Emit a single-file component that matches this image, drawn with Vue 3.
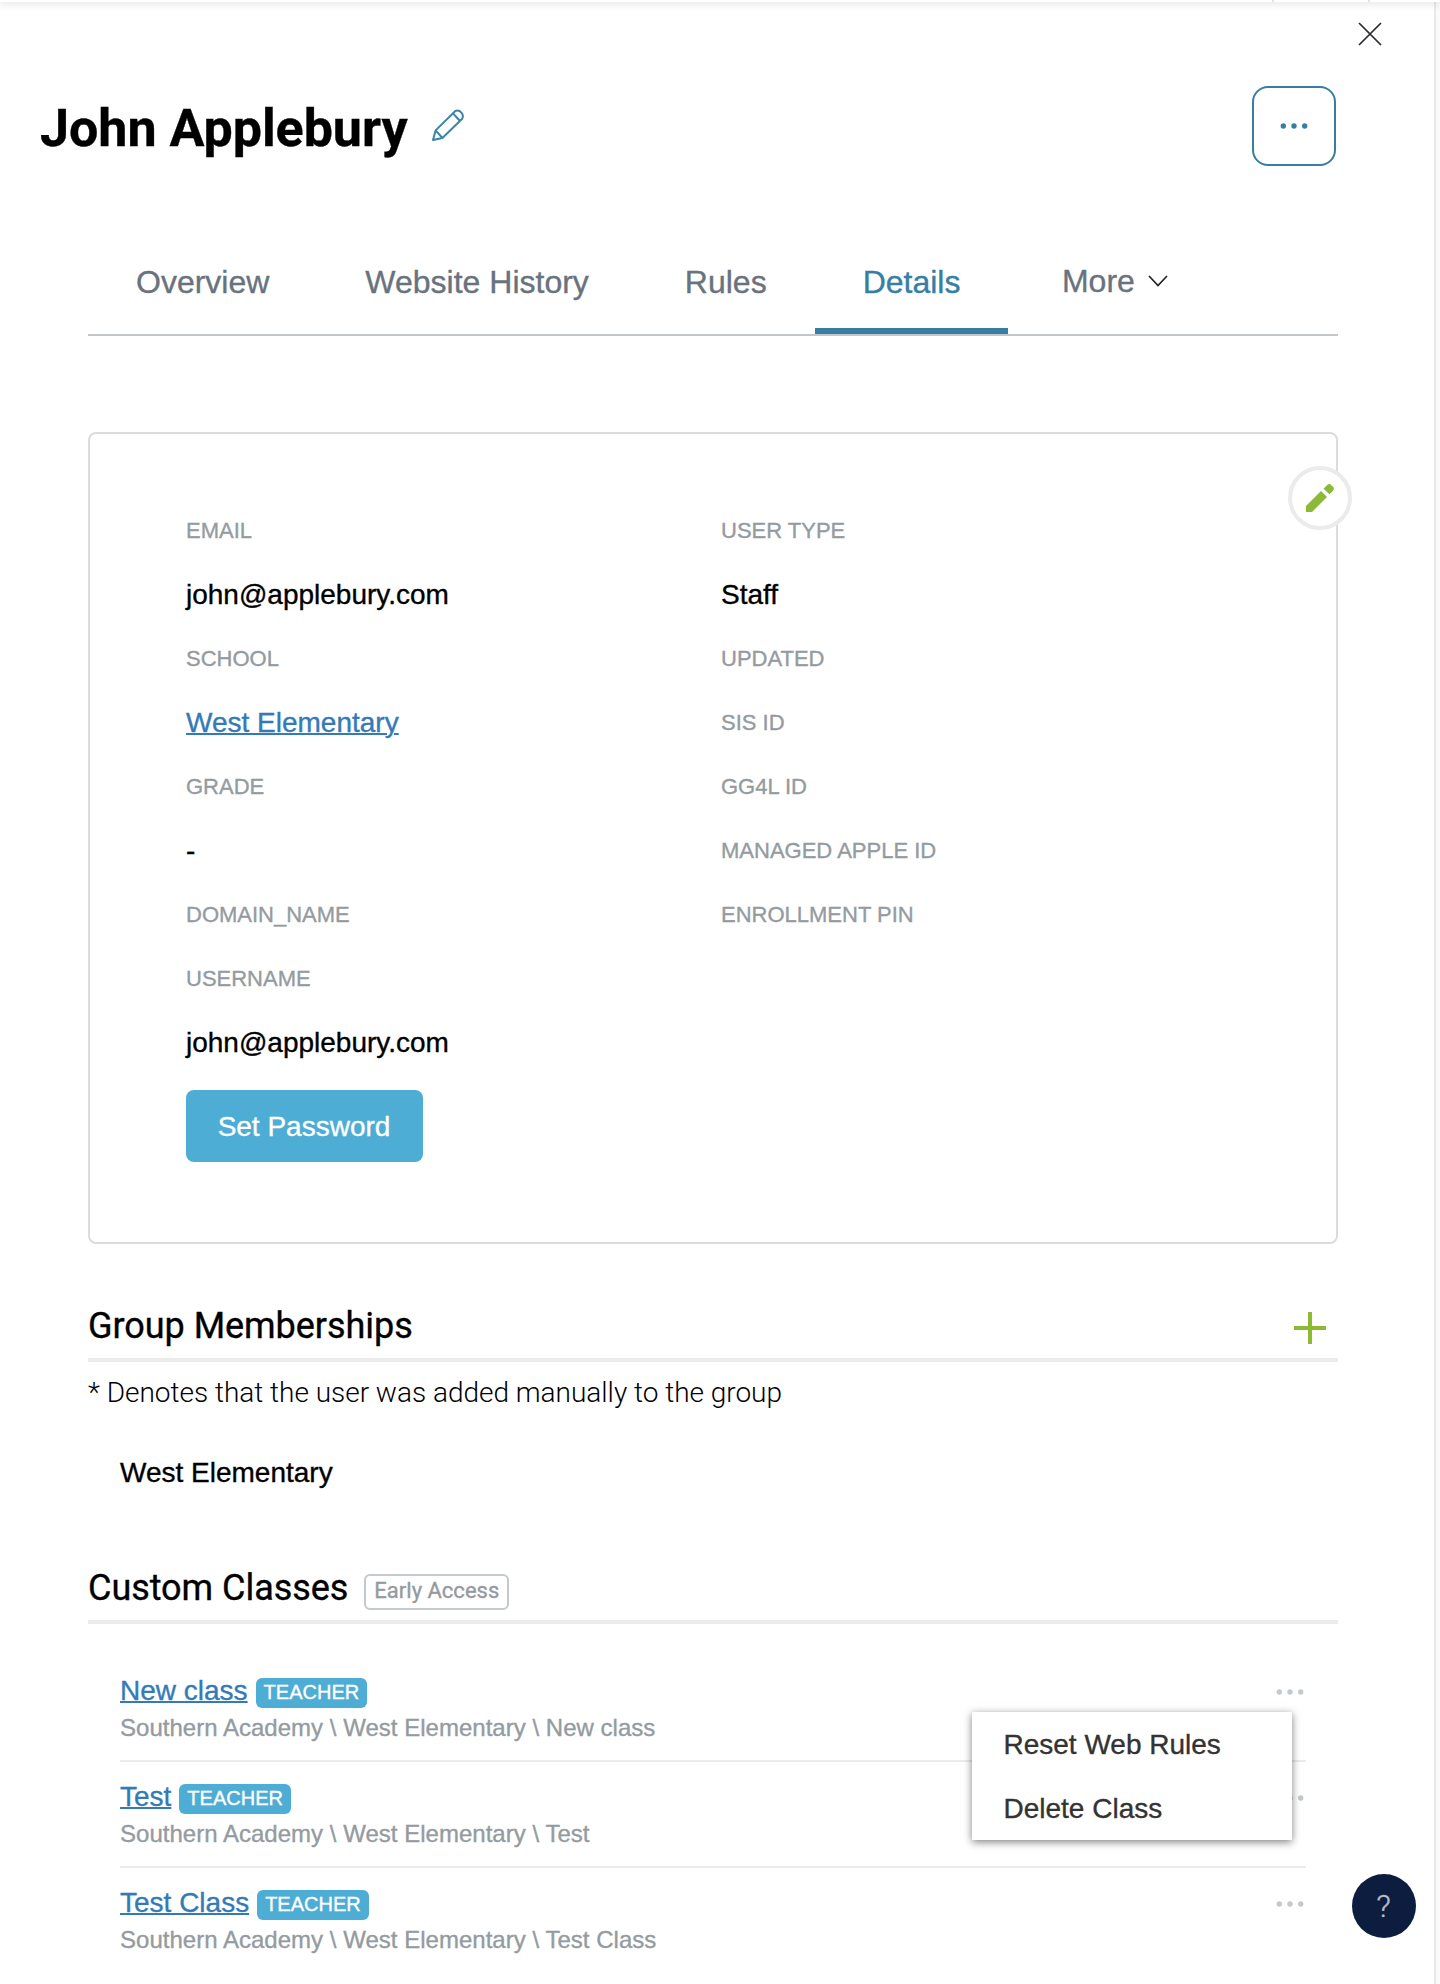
<template>
  <div class="page">
    <div class="top-strip">
      <span class="strip-cell"></span>
      <span class="strip-cell"></span>
    </div>
    <div class="panel">
      <div class="panel-top">
        <svg class="close-icon" viewBox="0 0 24 24">
          <path d="M1 1 L23 23 M23 1 L1 23" />
        </svg>
      </div>

      <header class="user-header">
        <h1>John Applebury</h1>
        <svg class="pencil-outline" viewBox="0 0 34 34">
          <path d="M2 32 L4.6 22.4 L24.3 3 A5.6 5.6 0 0 1 31.2 10.8 L11.4 30 Z" />
          <path d="M22 5.4 L29 13 M4.6 22.4 L11.4 30" />
        </svg>
        <button class="more-button">
          <svg viewBox="0 0 28 6">
            <circle cx="3.3" cy="3" r="2.7" />
            <circle cx="14" cy="3" r="2.7" />
            <circle cx="24.7" cy="3" r="2.7" />
          </svg>
        </button>
      </header>

      <nav class="tabs">
        <a
          v-for="tab in tabs"
          :key="tab"
          class="tab"
          :class="{ active: tab === activeTab }"
          @click="activeTab = tab"
        >{{ tab }}</a>
        <a class="tab tab-more">
          More
          <svg viewBox="0 0 20 12"><path d="M1 1 L10 10.5 L19 1" /></svg>
        </a>
      </nav>

      <section class="details-card">
        <div class="details-column">
          <template v-for="field in leftFields" :key="field.label">
            <div class="label">{{ field.label }}</div>
            <div v-if="field.value" class="value">
              <a v-if="field.link" class="link">{{ field.value }}</a>
              <span v-else>{{ field.value }}</span>
            </div>
          </template>
          <button class="password-button">Set Password</button>
        </div>
        <div class="details-column">
          <template v-for="field in rightFields" :key="field.label">
            <div class="label">{{ field.label }}</div>
            <div v-if="field.value" class="value">{{ field.value }}</div>
          </template>
        </div>
        <button class="edit-button">
          <svg viewBox="0 0 28 28">
            <path d="M0 22 L15 7 L21 13 L6 28 H0 Z" />
            <path d="M17.5 4.7 L21 1.2 Q23.2 -1 25.4 1.2 L26.8 2.6 Q29 4.8 26.8 7 L23.5 10.3 Z" />
          </svg>
        </button>
      </section>

      <section class="groups">
        <div class="section-title">
          <h2>Group Memberships</h2>
          <svg class="plus-icon" viewBox="0 0 32 32">
            <path d="M16 0 V32 M0 16 H32" />
          </svg>
        </div>
        <p class="note">* Denotes that the user was added manually to the group</p>
        <div class="group-name">West Elementary</div>
      </section>

      <section class="classes">
        <div class="section-title">
          <h2>Custom Classes</h2>
          <span class="early-access">Early Access</span>
        </div>
        <ul class="class-list">
          <li v-for="(item, index) in classes" :key="item" class="class-row">
            <div class="class-info">
              <div class="class-name">
                <a class="link">{{ item }}</a>
                <span class="role">TEACHER</span>
              </div>
              <div class="class-path">Southern Academy \ West Elementary \ {{ item }}</div>
            </div>
            <svg class="row-dots" viewBox="0 0 28 6" @click="toggleMenu(index)">
              <circle cx="3.3" cy="3" r="2.7" />
              <circle cx="14" cy="3" r="2.7" />
              <circle cx="24.7" cy="3" r="2.7" />
            </svg>
            <div v-if="openMenu === index" class="menu">
              <div class="menu-item">Reset Web Rules</div>
              <div class="menu-item">Delete Class</div>
            </div>
          </li>
        </ul>
      </section>
    </div>
    <button class="help-button">?</button>
  </div>
</template>

<script setup>
import { ref } from "vue";

const tabs = ["Overview", "Website History", "Rules", "Details"];
const activeTab = ref("Details");

const leftFields = [
  { label: "EMAIL", value: "john@applebury.com" },
  { label: "SCHOOL", value: "West Elementary", link: true },
  { label: "GRADE", value: "-" },
  { label: "DOMAIN_NAME" },
  { label: "USERNAME", value: "john@applebury.com" },
];

const rightFields = [
  { label: "USER TYPE", value: "Staff" },
  { label: "UPDATED" },
  { label: "SIS ID" },
  { label: "GG4L ID" },
  { label: "MANAGED APPLE ID" },
  { label: "ENROLLMENT PIN" },
];

const classes = ["New class", "Test", "Test Class"];
const openMenu = ref(0);

function toggleMenu(index) {
  openMenu.value = openMenu.value === index ? null : index;
}
</script>

<style>
body {
  margin: 0;
  background: #fafafa;
}
</style>

<style scoped>
* {
  box-sizing: border-box;
}

.page {
  position: relative;
  height: 1984px;
  overflow: hidden;
  background: #fafafa;
  color: #000;
  font-family: "Liberation Sans", Arial, sans-serif;
  font-size: 28px;
  -webkit-text-stroke: 0.35px;
}

button {
  font-family: inherit;
  cursor: pointer;
}

.top-strip {
  position: relative;
  z-index: 1;
  display: flex;
  justify-content: flex-end;
  height: 2px;
  padding-right: 70px;
  background: #fff;
  box-shadow: 0 0 8px rgba(0, 0, 0, 0.35);
}

.strip-cell {
  width: 96px;
  border-right: 2px solid #e3e3e3;
}

.panel {
  width: 1436px;
  height: 1982px;
  background: #fff;
  border-right: 2px solid #e8e8e8;
}

.panel-top {
  display: flex;
  justify-content: flex-end;
  height: 84px;
  padding: 20px 52px 0 0;
}

.close-icon {
  width: 24px;
  height: 24px;
  fill: none;
  stroke: #2b2830;
  stroke-width: 1.7;
}

.user-header {
  display: flex;
  align-items: center;
  height: 80px;
  padding: 0 98px 0 40px;
}

h1 {
  margin: 5px 23px 0 0;
  font-family: Roboto, sans-serif;
  font-size: 52px;
  font-weight: 700;
  line-height: 60px;
  letter-spacing: -0.04px;
}

.pencil-outline {
  width: 34px;
  height: 34px;
  margin-bottom: 2px;
  fill: none;
  stroke: #3a84a9;
  stroke-width: 2;
  stroke-linejoin: round;
}

.more-button {
  display: flex;
  align-items: center;
  justify-content: center;
  width: 84px;
  height: 80px;
  margin-left: auto;
  padding: 0;
  background: #fff;
  border: 2px solid #367fa3;
  border-radius: 16px;
}

.more-button svg {
  width: 28px;
  height: 6px;
  fill: #367fa3;
}

.tabs {
  display: flex;
  height: 112px;
  margin: 58px 96px 0 88px;
  border-bottom: 2px solid #c1c7cc;
}

.tab {
  padding: 39px 48px 0;
  color: #69737d;
  font-size: 32px;
  line-height: 38px;
  cursor: pointer;
}

.tab.active {
  color: #367fa3;
  border-bottom: 6px solid #367fa3;
}

.tab-more {
  display: flex;
  padding-left: 53.5px;
  padding-top: 38px;
}

.tab-more svg {
  width: 20px;
  height: 12px;
  margin: 13px 0 0 13px;
  fill: none;
  stroke: #222;
  stroke-width: 1.7;
}

.details-card {
  position: relative;
  display: flex;
  height: 812px;
  margin: 96px 96px 0 88px;
  padding: 64px 0 0 96px;
  border: 2px solid #dcdcdc;
  border-radius: 8px;
}

.details-column {
  width: 535px;
}

.label {
  height: 64px;
  color: #949ba0;
  font-size: 22px;
  line-height: 66px;
}

.value {
  height: 64px;
  line-height: 66px;
}

.link {
  color: #337ab7;
  text-decoration: underline;
  text-decoration-thickness: 2px;
  cursor: pointer;
}

.password-button {
  display: block;
  width: 237px;
  height: 72px;
  margin-top: 16px;
  padding: 2px 1px 0 0;
  background: #4eadd4;
  border: none;
  border-radius: 8px;
  color: #fff;
  font-size: 28px;
}

.edit-button {
  position: absolute;
  top: 32px;
  right: -16px;
  display: flex;
  align-items: center;
  justify-content: center;
  width: 64px;
  height: 64px;
  padding: 0;
  background: #fff;
  border: 4px solid #ebebeb;
  border-radius: 50%;
}

.edit-button svg {
  width: 28px;
  height: 28px;
  fill: #8cba36;
}

.groups,
.classes {
  margin: 0 96px 0 88px;
}

.section-title {
  display: flex;
  border-bottom: 4px solid #ebebeb;
}

h2 {
  margin: 0;
  font-family: Roboto, sans-serif;
  font-size: 36px;
  font-weight: 400;
  line-height: 44px;
  letter-spacing: -0.04px;
}

.groups .section-title {
  height: 58px;
  margin-top: 60px;
}

.plus-icon {
  width: 32px;
  height: 32px;
  margin: 8px 12px 0 auto;
  fill: none;
  stroke: #8cba36;
  stroke-width: 4;
}

.note {
  margin: 13px 0 0;
  font-family: Roboto, sans-serif;
  font-weight: 300;
  line-height: 36px;
  letter-spacing: -0.02px;
  -webkit-text-stroke: 0;
}

.group-name {
  margin: 44px 0 0 32px;
  line-height: 36px;
}

.classes .section-title {
  height: 58px;
  margin-top: 75px;
}

.early-access {
  height: 36px;
  margin: 8px 0 0 16px;
  padding: 0 8px;
  border: 2px solid #c3c9cd;
  border-radius: 6px;
  color: #949ba0;
  font-family: Roboto, sans-serif;
  font-size: 22px;
  line-height: 29px;
}

.class-list {
  margin: 32px 32px 0;
  padding: 0;
  list-style: none;
}

.class-row {
  position: relative;
  display: flex;
  justify-content: space-between;
  height: 106px;
  padding-top: 16px;
  border-bottom: 2px solid #ebebeb;
}

.class-row:last-child {
  border-bottom: none;
}

.class-name {
  display: flex;
  gap: 8px;
  height: 38px;
  line-height: 38px;
}

.role {
  height: 30px;
  margin-top: 6px;
  padding: 0 8px;
  background: #4eadd4;
  border-radius: 6px;
  color: #fff;
  font-size: 20px;
  line-height: 29px;
}

.class-path {
  color: #949ba0;
  font-size: 24px;
  line-height: 36px;
  letter-spacing: 0.02px;
}

.row-dots {
  width: 28px;
  height: 6px;
  margin: 17px 2px 0 0;
  fill: #c3c9cd;
  cursor: pointer;
}

.menu {
  position: absolute;
  top: 56px;
  right: 14px;
  z-index: 2;
  width: 320px;
  background: #fff;
  box-shadow: 0 2px 8px rgba(0, 0, 0, 0.5);
}

.menu-item {
  height: 64px;
  padding-left: 31.5px;
  color: #333;
  line-height: 66px;
}

.help-button {
  position: absolute;
  right: 24px;
  bottom: 46px;
  width: 64px;
  height: 64px;
  padding: 0 1px 0 0;
  background: #0c1d3f;
  border: none;
  border-radius: 50%;
  color: #b6bcc6;
  font-family: Roboto, sans-serif;
  font-size: 32px;
  font-weight: 300;
}
</style>
